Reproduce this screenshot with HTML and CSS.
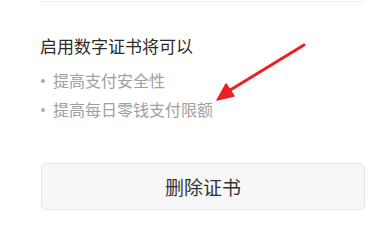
FILE: index.html
```html
<!DOCTYPE html>
<html lang="zh-CN">
<head>
    <meta charset="UTF-8">
    <meta name="viewport" content="width=device-width, initial-scale=1.0">
    <title>数字证书</title>
    <link rel="stylesheet" href="styles.css">
</head>
<body>
    <div class="page">
        <div class="divider"></div>

        <!-- 证书说明 -->
        <section class="info">
            <h2 class="info-title">启用数字证书将可以</h2>
            <ul class="info-list">
                <li>提高支付安全性</li>
                <li>提高每日零钱支付限额</li>
            </ul>
        </section>

        <button class="btn-delete">删除证书</button>

        <!-- 标注箭头 -->
        <svg class="arrow" width="100" height="64" viewBox="0 0 100 64">
            <line x1="93" y1="3" x2="16" y2="50" stroke="#ec1f26" stroke-width="3" stroke-linecap="round"/>
            <polygon points="6,58 15,42 23,54" fill="#ec1f26" stroke="#ec1f26" stroke-width="1.5" stroke-linejoin="round"/>
        </svg>
    </div>
</body>
</html>
```

FILE: styles.css
```css
/* General styling */
body {
    margin: 0;
    font-family: "Noto Sans CJK SC", "Noto Sans", sans-serif;
    background-color: #fff;
    color: #333;
}

.page {
    position: relative;
    padding: 1px 20px 0 40px;
    height: 244px;
}

.divider {
    height: 1px;
    margin-left: -1px;
    background-color: #f0f0f0;
}

.info {
    padding-top: 32px;
}

.info-title {
    margin: 0;
    font-size: 17px;
    font-weight: normal;
    line-height: 24px;
    color: #2b2b2b;
}

.info-list {
    list-style: none;
    margin: 8px 0 0;
    padding: 0;
}

.info-list li {
    display: flex;
    align-items: center;
    font-size: 16px;
    line-height: 29px;
    color: #a0a0a0;
}

.info-list li::before {
    content: "";
    width: 4px;
    height: 4px;
    margin: 0 8px 0 1px;
    border-radius: 50%;
    background-color: #a8a8a8;
}

.btn-delete {
    display: block;
    width: 100%;
    height: 47px;
    margin-top: 39px;
    margin-left: 1px;
    padding: 0;
    font-family: inherit;
    font-size: 19px;
    color: #333;
    background-color: #f7f7f7;
    border: 1px solid #e6e6e6;
    border-radius: 5px;
}

.arrow {
    position: absolute;
    left: 211px;
    top: 42px;
}
```
